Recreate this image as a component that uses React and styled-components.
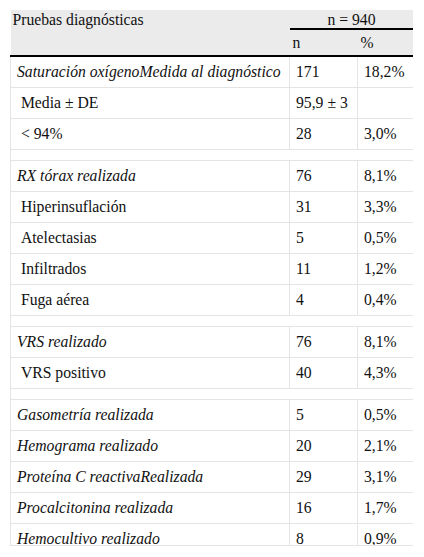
import React from 'react';
import styled, { createGlobalStyle } from 'styled-components';

const Global = createGlobalStyle`
  body {
    margin: 0;
    background: #fff;
    font-family: "Liberation Serif", "Times New Roman", serif;
    color: #111;
  }
`;

const Clip = styled.div`
  margin: 10px 0 0 10px;
  width: 403px;
  height: 536px;
  overflow: hidden;
  border-bottom: 1px solid #e4e4e4;
  box-sizing: border-box;
`;

const Table = styled.table`
  width: 403px;
  border-collapse: collapse;
  font-family: "Liberation Serif", "Times New Roman", serif;
  font-size: 15.7px;
  color: #111;
  table-layout: fixed;
`;

const Head = styled.thead`
  background: #ebebeb;
  border-bottom: 2px solid #000;
`;

const Th = styled.th`
  font-weight: normal;
  text-align: ${p => (p.$center ? 'center' : 'left')};
  vertical-align: top;
  padding: ${p => p.$pad || '0 2px'};
  height: ${p => p.$h || 'auto'};
  line-height: 17px;
  border-bottom: ${p => (p.$rule ? '2px solid #000' : 'none')};
`;

const Td = styled.td`
  height: 30px;
  padding: 0 6px;
  border: 1px solid #e4e4e4;
  border-top: none;
  font-style: ${p => (p.$italic ? 'italic' : 'normal')};
  white-space: nowrap;
  vertical-align: middle;
`;

const Spacer = styled.td`
  height: 10px;
  padding: 0;
  border: 1px solid #e4e4e4;
  border-top: none;
`;

const rows = [
  { label: 'Saturación oxígenoMedida al diagnóstico', n: '171', p: '18,2%', it: true },
  { label: '\u00a0Media ± DE', n: '95,9 ± 3', p: '' },
  { label: '\u00a0< 94%', n: '28', p: '3,0%' },
  { spacer: true },
  { label: 'RX tórax realizada', n: '76', p: '8,1%', it: true },
  { label: '\u00a0Hiperinsuflación', n: '31', p: '3,3%' },
  { label: '\u00a0Atelectasias', n: '5', p: '0,5%' },
  { label: '\u00a0Infiltrados', n: '11', p: '1,2%' },
  { label: '\u00a0Fuga aérea', n: '4', p: '0,4%' },
  { spacer: true },
  { label: 'VRS realizado', n: '76', p: '8,1%', it: true },
  { label: '\u00a0VRS positivo', n: '40', p: '4,3%' },
  { spacer: true },
  { label: 'Gasometría realizada', n: '5', p: '0,5%', it: true },
  { label: 'Hemograma realizado', n: '20', p: '2,1%', it: true },
  { label: 'Proteína C reactivaRealizada', n: '29', p: '3,1%', it: true },
  { label: 'Procalcitonina realizada', n: '16', p: '1,7%', it: true },
  { label: 'Hemocultivo realizado', n: '8', p: '0,9%', it: true },
];

export default function App() {
  return (
    <>
      <Global />
      <Clip>
        <Table>
          <colgroup>
            <col style={{ width: 279 }} />
            <col style={{ width: 68 }} />
            <col style={{ width: 56 }} />
          </colgroup>
          <Head>
            <tr>
              <Th rowSpan={2} $pad="1px 2px">Pruebas diagnósticas</Th>
              <Th colSpan={2} $center $rule $h="17px" $pad="1px 0 0">n = 940</Th>
            </tr>
            <tr>
              <Th $pad="4px 3px 0" $h="21px">n</Th>
              <Th $pad="4px 3px 0" $h="21px">%</Th>
            </tr>
          </Head>
          <tbody>
            {rows.map((r, i) =>
              r.spacer ? (
                <tr key={i}>
                  <Spacer colSpan={3} />
                </tr>
              ) : (
                <tr key={i}>
                  <Td $italic={r.it}>{r.label}</Td>
                  <Td>{r.n}</Td>
                  <Td>{r.p}</Td>
                </tr>
              )
            )}
          </tbody>
        </Table>
      </Clip>
    </>
  );
}
